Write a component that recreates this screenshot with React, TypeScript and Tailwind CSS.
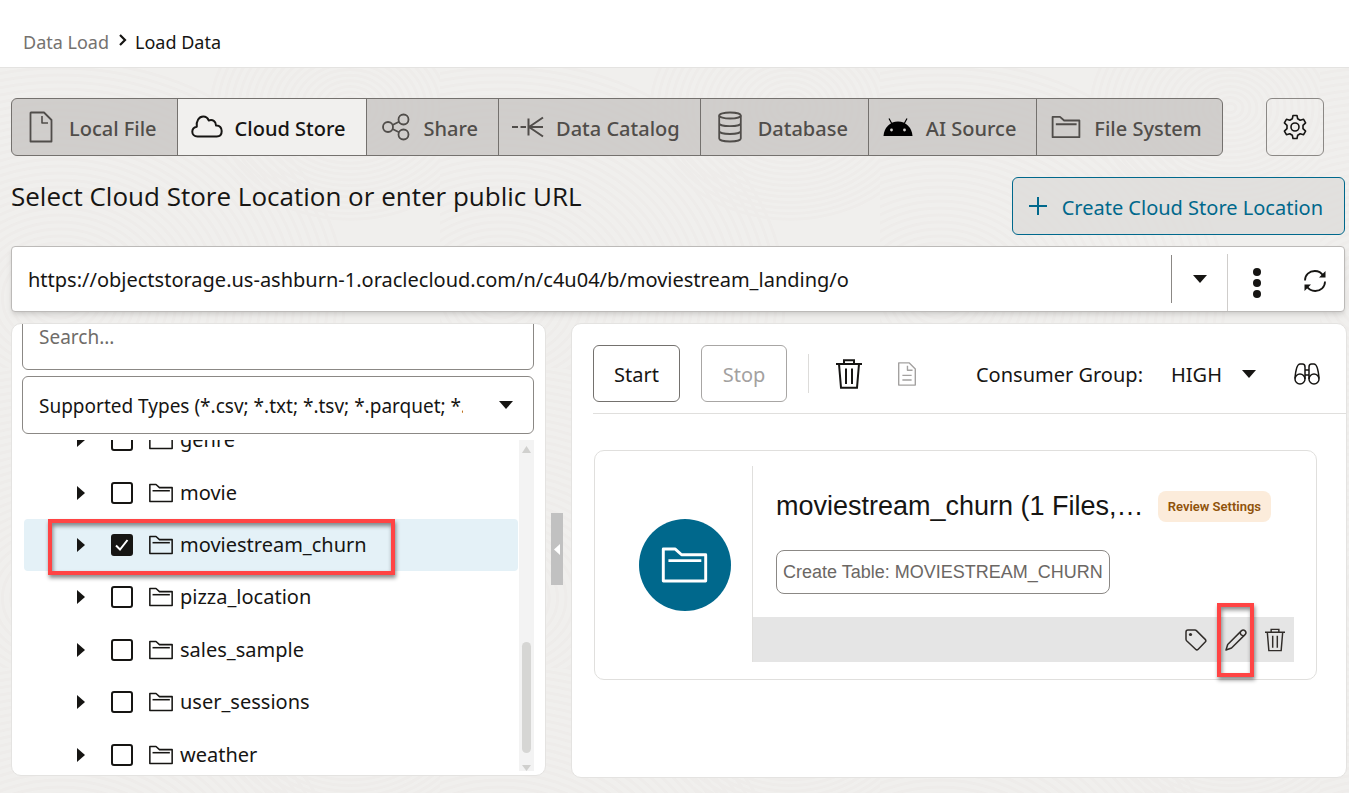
import React from "react";

type IconProps = { className?: string };

const stroke = {
  fill: "none",
  stroke: "currentColor",
  strokeWidth: 2,
  strokeLinejoin: "round" as const,
};

function FileIcon({ className }: IconProps) {
  return (
    <svg className={className} viewBox="0 0 24 32" {...stroke} strokeWidth={1.8} aria-hidden="true">
      <path d="M2 1.500h13l7.500 7.500V30.500H1.500V2z" />
      <path d="M13 5v7h6" strokeWidth="1.600" />
    </svg>
  );
}

function CloudIcon({ className }: IconProps) {
  return (
    <svg className={className} viewBox="0 0 32 24" {...stroke} aria-hidden="true">
      <path d="M6.500 21.500C3.300 21.500 1.300 19.300 1.300 16.700c0-2.600 1.700-4.600 4.500-5C5 6 8 1.500 12.200 1.500c2.600 0 4.600 1.500 5.500 4 4-1.300 7.200.8 7.300 5 3.700-.3 5.700 2.300 5.700 5.500 0 3.300-2 5.500-5 5.500z" />
    </svg>
  );
}

function ShareIcon({ className }: IconProps) {
  return (
    <svg className={className} viewBox="0 0 28 28" {...stroke} strokeWidth={1.8} aria-hidden="true">
      <circle cx="6" cy="14" r="5" />
      <circle cx="21.500" cy="6.500" r="5" />
      <circle cx="21.500" cy="21.500" r="5" />
      <path d="M10.500 12 17 8.700M10.500 16l6.500 3.200" />
    </svg>
  );
}

function CatalogIcon({ className }: IconProps) {
  return (
    <svg className={className} viewBox="0 0 32 22" {...stroke} aria-hidden="true">
      <path d="M0 11h6M8.500 11h5.500M16.500 2.500v17M17 11h14M17 11 31 1.500M17 11l14 9.500" />
    </svg>
  );
}

function DatabaseIcon({ className }: IconProps) {
  return (
    <svg className={className} viewBox="0 0 24 32" {...stroke} strokeWidth={1.8} aria-hidden="true">
      <ellipse cx="12" cy="4.500" rx="10.800" ry="3" />
      <path d="M1.200 4.500v23c0 1.700 4.900 3 10.800 3s10.800-1.300 10.800-3v-23M1.200 12.200c0 1.700 4.900 3 10.800 3s10.800-1.300 10.800-3M1.200 20c0 1.700 4.900 3 10.800 3s10.800-1.300 10.800-3" />
    </svg>
  );
}

function RobotIcon({ className }: IconProps) {
  return (
    <svg className={className} viewBox="0 0 30 18" aria-hidden="true">
      <path d="M.5 18C1 9.800 7 3.500 15 3.500S29 9.800 29.500 18z" fill="#000" />
      <path d="M6 .5l3 5.500M24 .5l-3 5.500" stroke="#000" strokeWidth="1.200" />
      <circle cx="8.500" cy="12" r="1.400" fill="#d8d6d4" />
      <circle cx="21.500" cy="12" r="1.400" fill="#d8d6d4" />
    </svg>
  );
}

function FolderIcon({ className, weight = 2 }: IconProps & { weight?: number }) {
  return (
    <svg className={className} viewBox="0 0 32 26" {...stroke} strokeWidth={weight} aria-hidden="true">
      <path d="M1.500 2h8l4.500 4h16.500v18h-29z" />
      <path d="M5 10h22.500" />
    </svg>
  );
}

function GearIcon({ className }: IconProps) {
  return (
    <svg className={className} viewBox="0 0 24 26" {...stroke} strokeWidth={1.6} aria-hidden="true">
      <path d="M10 1.500h4l.7 3.300 2.500 1.500 3.400-1 2 3.500-2.600 2.500v3.400l2.600 2.500-2 3.500-3.400-1-2.500 1.500-.7 3.300h-4l-.7-3.300-2.500-1.500-3.400 1-2-3.500L4 14.700v-3.400L1.400 8.800l2-3.500 3.400 1 2.500-1.500z" />
      <circle cx="12" cy="13" r="4" />
    </svg>
  );
}

function RefreshIcon({ className }: IconProps) {
  return (
    <svg className={className} viewBox="0 0 24 24" {...stroke} strokeWidth={1.8} aria-hidden="true">
      <path d="M2 11.500C2 6 6.300 2 11.800 2c3.700 0 6.700 1.800 8.500 4.700M22 12.500c0 5.500-4.300 9.500-9.800 9.500-3.700 0-6.700-1.800-8.500-4.700" />
      <path d="M22.500 2v6.500H16zM1.500 22v-6.500H8z" fill="currentColor" stroke="none" />
    </svg>
  );
}

function TrashIcon({ className, weight = 2 }: IconProps & { weight?: number }) {
  return (
    <svg className={className} viewBox="0 0 26 30" {...stroke} strokeWidth={weight} strokeLinejoin="miter" aria-hidden="true">
      <path d="M0 5h26M8 5V1.200h10V5M3 5l2 23.800h16L23 5M10 9.500v15.500M16 9.500v15.500" />
    </svg>
  );
}

function DocumentIcon({ className }: IconProps) {
  return (
    <svg className={className} viewBox="0 0 20 26" {...stroke} strokeWidth={1.5} aria-hidden="true">
      <path d="M1 1h11.500L19 7.500V25H1z" />
      <path d="M10.500 4v5H16M5 14.500h10M5 19.500h10" />
    </svg>
  );
}

function BinocularsIcon({ className }: IconProps) {
  return (
    <svg className={className} viewBox="0 0 26 22" {...stroke} strokeWidth={1.5} aria-hidden="true">
      <circle cx="6" cy="16" r="5" />
      <circle cx="20" cy="16" r="5" />
      <path d="M1 15.500C1.500 9 3 1 6 1h2.500C10.500 1 11 2.500 11 4v12M25 15.500C24.500 9 23 1 20 1h-2.500C15.500 1 15 2.500 15 4v12M11 7h4M11 12h4" />
    </svg>
  );
}

function TagIcon({ className }: IconProps) {
  return (
    <svg className={className} viewBox="0 0 22 22" {...stroke} strokeWidth={1.5} aria-hidden="true">
      <path d="M1 3c0-1.200.8-2 2-2h7c.5 0 1 .2 1.400.6l8.800 8.800c.8.800.8 1.800 0 2.600l-7 7.200c-.8.800-1.800.8-2.600 0L1.600 11.700C1.200 11.300 1 10.800 1 10.300z" />
      <circle cx="5.500" cy="5.500" r="1.600" fill="currentColor" stroke="none" />
    </svg>
  );
}

function PencilIcon({ className }: IconProps) {
  return (
    <svg className={className} viewBox="0 0 22 22" {...stroke} strokeWidth={1.5} aria-hidden="true">
      <path d="M1 21l1.700-5.500L16.300 1.900c1.200-1.200 2.800-1 3.800 0s1.100 2.500-.1 3.700L6.500 19z" />
      <path d="M15.300 3c-.3 2.300 1.200 4 3.700 3.700" />
    </svg>
  );
}

function CaretDown({ className }: IconProps) {
  return (
    <svg className={className} viewBox="0 0 14 8" aria-hidden="true">
      <path d="M0 0h14L7 8z" fill="#161513" />
    </svg>
  );
}

function Texture() {
  const rings = Array.from({ length: 34 }, (_, i) => 6 + i * 7);
  return (
    <svg className="absolute inset-0 h-full w-full" aria-hidden="true">
      <defs>
        <pattern id="rings" width="440" height="300" patternUnits="userSpaceOnUse">
          <g fill="none" stroke="#eeecea" strokeWidth="3">
            {rings.map((r) => (
              <ellipse key={r} cx="60" cy="230" rx={r * 1.2} ry={r} />
            ))}
            {rings.slice(0, 20).map((r) => (
              <ellipse key={r} cx="350" cy="40" rx={r} ry={r * 0.8} />
            ))}
          </g>
        </pattern>
      </defs>
      <rect width="100%" height="100%" fill="url(#rings)" />
    </svg>
  );
}

const tabs = [
  { label: "Local File", icon: <FileIcon className="h-8 w-6" /> },
  { label: "Cloud Store", icon: <CloudIcon className="h-6 w-8" />, active: true },
  { label: "Share", icon: <ShareIcon className="size-7" /> },
  { label: "Data Catalog", icon: <CatalogIcon className="h-[22px] w-8" /> },
  { label: "Database", icon: <DatabaseIcon className="h-8 w-6" /> },
  { label: "AI Source", icon: <RobotIcon className="h-[18px] w-[30px]" /> },
  { label: "File System", icon: <FolderIcon className="h-6 w-8" /> },
];

const folders = [
  { name: "genre" },
  { name: "movie" },
  { name: "moviestream_churn", checked: true },
  { name: "pizza_location" },
  { name: "sales_sample" },
  { name: "user_sessions" },
  { name: "weather" },
];

function TreeRow({ name, checked }: { name: string; checked?: boolean }) {
  return (
    <li className={`relative flex items-center rounded pl-[53px] ${checked ? "bg-[#e4f1f7]" : ""}`}>
      <button type="button" aria-label={`Expand ${name}`} className="flex w-[34px] shrink-0">
        <svg className="h-[14px] w-2" viewBox="0 0 8 14" aria-hidden="true">
          <path d="M0 0l8 7-8 7z" fill="#161513" />
        </svg>
      </button>
      <label className="flex items-center">
        <span className="relative mr-[15px] flex size-[22px]">
          <input
            type="checkbox"
            defaultChecked={checked}
            className="peer size-[22px] appearance-none rounded-[3px] border-2 border-[#161513] bg-white checked:bg-[#161513]"
          />
          <svg
            className="pointer-events-none absolute inset-0 hidden size-[22px] peer-checked:block"
            viewBox="0 0 22 22"
            fill="none"
            stroke="#fff"
            strokeWidth="2"
            aria-hidden="true"
          >
            <path d="M5 11.500l4 4 7.500-9.500" />
          </svg>
        </span>
        <FolderIcon className="h-5 w-[26px]" />
        <span className="pl-1.5 text-xl">{name}</span>
      </label>
      {checked && (
        <span className="pointer-events-none absolute top-0 left-6 h-[56px] w-[347px] border-4 border-[#ff4444] shadow-[1px_3px_4px_rgba(0,0,0,0.45),inset_1px_3px_4px_rgba(0,0,0,0.45)]" />
      )}
    </li>
  );
}

export default function App() {
  return (
    <div className="flex min-h-screen flex-col overflow-hidden bg-[#f0efed] font-['Noto_Sans',sans-serif] text-[#161513]">
      <header className="flex h-[68px] items-center border-b border-[#e4e3e1] bg-white px-[23px] pt-4 text-lg">
        <nav aria-label="Breadcrumb" className="flex items-center">
          <a href="#data-load" className="text-[#75726f]">Data Load</a>
          <svg className="mr-2 mb-1 ml-2.5 h-3 w-2" viewBox="0 0 8 12" fill="none" stroke="#161513" strokeWidth="2.200" aria-hidden="true">
            <path d="M1 1l5 5-5 5" />
          </svg>
          <span aria-current="page">Load Data</span>
        </nav>
      </header>

      <main className="relative flex-1 pt-[30px] pr-1 pb-4 pl-[11px]">
        <Texture />
        <div className="relative">
          <div className="flex items-start justify-between pr-[21px]">
            <div role="tablist" className="flex h-[58px] overflow-hidden rounded-md border border-[#74716e] bg-[#cccac8]/90">
              {tabs.map((tab) => (
                <button
                  key={tab.label}
                  type="button"
                  role="tab"
                  aria-selected={!!tab.active}
                  className={`flex items-center border-r border-[#74716e] pr-5 pl-[13px] text-xl font-medium last:border-r-0 ${
                    tab.active ? "bg-[#f1f0ee] text-[#161513]" : "text-[#504d4a]"
                  }`}
                >
                  <span className="flex w-8 justify-center">{tab.icon}</span>
                  <span className="pt-1 pl-3">{tab.label}</span>
                </button>
              ))}
            </div>
            <button type="button" aria-label="Settings" className="flex size-[58px] items-center justify-center rounded-md border border-[#8b8885]">
              <GearIcon className="h-[26px] w-6" />
            </button>
          </div>

          <div className="mt-[21px] flex items-start justify-between">
            <h1 className="font-['Open_Sans',sans-serif] text-[26px] leading-[38px]">Select Cloud Store Location or enter public URL</h1>
            <button
              type="button"
              className="flex h-[58px] items-center gap-[15px] rounded-md border border-[#00688c] bg-[#dddcda]/80 pr-[21px] pl-4 text-xl text-[#00688c]"
            >
              <svg className="size-[18px]" viewBox="0 0 18 18" stroke="currentColor" strokeWidth="2" aria-hidden="true">
                <path d="M9 0v18M0 9h18" />
              </svg>
              <span className="pt-1">Create Cloud Store Location</span>
            </button>
          </div>

          <div className="mt-[11px] flex h-[66px] rounded-sm border border-[#bcbab8] bg-white shadow-md">
            <input
              aria-label="Cloud store location or public URL"
              defaultValue="https://objectstorage.us-ashburn-1.oraclecloud.com/n/c4u04/b/moviestream_landing/o"
              className="min-w-0 flex-1 px-4 pt-0.5 text-xl outline-none"
            />
            <button type="button" aria-label="Show locations" className="my-2 flex w-[56px] items-center justify-center border-l border-[#8b8885]">
              <CaretDown className="h-2 w-[14px]" />
            </button>
            <button type="button" aria-label="More actions" className="mt-[7px] flex w-[59px] items-center justify-center border-l border-[#cfcdcb]">
              <svg className="h-[30px] w-2" viewBox="0 0 8 30" fill="#161513" aria-hidden="true">
                <circle cx="4" cy="4" r="4" />
                <circle cx="4" cy="15" r="4" />
                <circle cx="4" cy="26" r="4" />
              </svg>
            </button>
            <button type="button" aria-label="Refresh" className="mt-1 flex w-[58px] items-center justify-center">
              <RefreshIcon className="size-6" />
            </button>
          </div>

          <div className="mt-[11px] -mr-0.5 flex items-start">
            <section aria-label="Cloud store files" className="w-[535px] shrink-0 overflow-hidden rounded-[10px] border border-[#e4e3e1] bg-white pr-[11px] pb-1 pl-2.5">
              <input
                aria-label="Search"
                placeholder="Search..."
                className="-mt-3 block h-[58px] w-full rounded-md border border-[#8b8885] px-4 pb-2 text-[19px] outline-none placeholder:text-[#6f6c69]"
              />
              <div className="relative mt-1.5">
                <select
                  aria-label="File types"
                  className="block h-[58px] w-full appearance-none rounded-md border border-[#8b8885] bg-white pt-0.5 pr-[70px] pl-4 text-[19px] outline-none"
                >
                  <option>Supported Types (*.csv; *.txt; *.tsv; *.parquet; *.</option>
                </select>
                <CaretDown className="pointer-events-none absolute top-[25px] right-[21px] h-2 w-[14px]" />
              </div>
              <div className="mt-1.5 flex h-[331px] overflow-hidden">
                <ul className="-mt-[26px] mr-px ml-0.5 grid h-[367px] flex-1 auto-rows-fr">
                  {folders.map((f) => (
                    <TreeRow key={f.name} {...f} />
                  ))}
                </ul>
                <div className="flex w-[15px] flex-col items-center bg-[#f3f3f3] pt-1.5" aria-hidden="true">
                  <svg className="h-[7px] w-[9px]" viewBox="0 0 9 7" fill="#d0d0ce">
                    <path d="M4.500 0L9 7H0z" />
                  </svg>
                  <span className="mt-auto h-[111px] w-[9px] rounded-full bg-[#d6d6d4]" />
                  <svg className="mt-3 h-1.5 w-[9px]" viewBox="0 0 9 6" fill="#d0d0ce">
                    <path d="M4.500 6L0 0h9z" />
                  </svg>
                </div>
              </div>
            </section>

            <button type="button" aria-label="Collapse panel" className="mr-2 ml-[5px] mt-[190px] flex h-[72px] w-3 items-center justify-center bg-[#c1c1c1]">
              <svg className="h-[11px] w-1.5" viewBox="0 0 6 11" aria-hidden="true">
                <path d="M6 0v11L0 5.500z" fill="#fff" />
              </svg>
            </button>

            <section aria-label="Load jobs" className="min-h-[455px] min-w-0 flex-1 rounded-[10px] border border-[#e4e3e1] bg-white pt-[21px] pl-[21px]">
              <div className="flex items-center border-b border-[#e0dfdd] pr-[26px] pb-[11px] text-xl">
                <button type="button" className="h-[57px] w-[87px] rounded-md border border-[#74716e] pt-0.5">Start</button>
                <button type="button" disabled className="ml-[21px] h-[57px] w-[86px] rounded-md border border-[#a8a6a4] pt-0.5 text-[#a3a1a0]">Stop</button>
                <span className="ml-[21px] h-[39px] w-px bg-[#dddcda]" />
                <button type="button" aria-label="Remove all" className="ml-[27px]">
                  <TrashIcon className="h-[30px] w-[26px]" />
                </button>
                <button type="button" aria-label="Report" disabled className="ml-[35px] text-[#a3a1a0]">
                  <DocumentIcon className="h-6 w-5" />
                </button>
                <label htmlFor="group" className="ml-auto pt-0.5">Consumer Group:</label>
                <span className="relative ml-7 flex items-center">
                  <select id="group" className="w-[85px] appearance-none bg-white pt-0.5 outline-none">
                    <option>HIGH</option>
                  </select>
                  <CaretDown className="pointer-events-none absolute right-0 h-2 w-[14px]" />
                </span>
                <button type="button" aria-label="Find" className="ml-[38px]">
                  <BinocularsIcon className="h-[22px] w-[26px]" />
                </button>
              </div>

              <article className="mt-9 mr-[29px] ml-px flex h-[230px] rounded-[10px] border border-[#e0dfdd] pt-[15px] pr-[22px] pb-[17px]">
                <div className="flex w-[158px] items-center justify-center border-r border-[#e0dfdd] pt-0.5 pl-[22px]">
                  <span className="flex size-[92px] items-center justify-center rounded-full bg-[#00688c] text-white">
                    <FolderIcon className="h-[38px] w-[47px]" />
                  </span>
                </div>
                <div className="flex min-w-0 flex-1 flex-col font-['Liberation_Sans',Arial,sans-serif]">
                  <div className="flex items-center justify-between pt-6 pr-[23px] pl-[23px]">
                    <h2 className="text-[27px] leading-8 whitespace-nowrap">moviestream_churn (1 Files,…</h2>
                    <span className="rounded-lg bg-[#fcecdb] px-2.5 font-['Roboto',sans-serif] text-[13px] leading-[31px] font-semibold whitespace-nowrap text-[#8f520a]">
                      Review Settings
                    </span>
                  </div>
                  <div className="pt-7 pl-[23px]">
                    <button type="button" className="h-11 rounded-lg border border-[#8b8885] px-1.5 text-lg text-[#6b6764]">
                      Create Table: MOVIESTREAM_CHURN
                    </button>
                  </div>
                  <div className="mt-auto flex h-[45px] items-center justify-end gap-[18px] bg-[#e5e5e5] pr-[9px] text-[#312d2a]">
                    <button type="button" aria-label="Tags">
                      <TagIcon className="size-[22px]" />
                    </button>
                    <span className="relative flex">
                      <button type="button" aria-label="Edit">
                        <PencilIcon className="size-[22px]" />
                      </button>
                      <span className="pointer-events-none absolute -top-[26px] -left-2 h-[74px] w-[37px] border-4 border-[#ff4444] shadow-[1px_3px_4px_rgba(0,0,0,0.45),inset_1px_3px_4px_rgba(0,0,0,0.45)]" />
                    </span>
                    <button type="button" aria-label="Delete">
                      <TrashIcon className="h-6 w-5" weight={1.9} />
                    </button>
                  </div>
                </div>
              </article>
            </section>
          </div>
        </div>
      </main>
    </div>
  );
}
